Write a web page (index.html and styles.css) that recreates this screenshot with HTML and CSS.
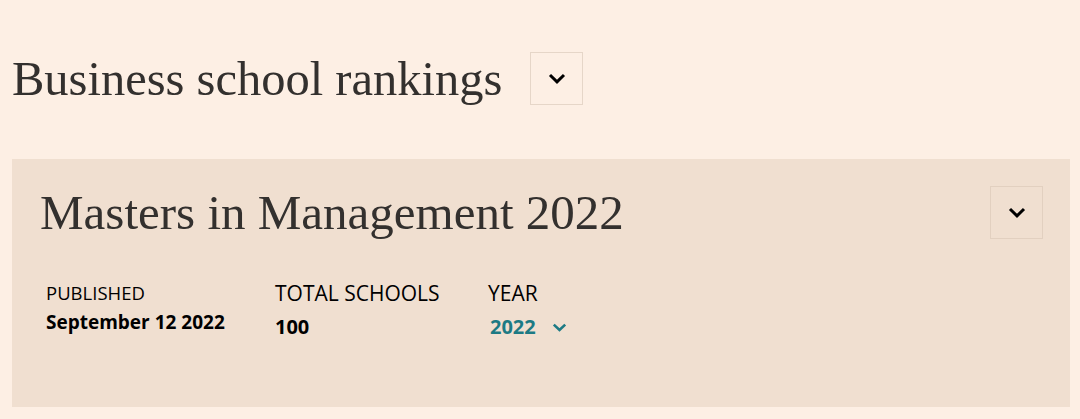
FILE: index.html
```html
<!DOCTYPE html>
<html lang="en">
<head>
<meta charset="utf-8">
<title>Business school rankings</title>
<link rel="stylesheet" href="styles.css">
</head>
<body>
<main class="page">
  <header class="page-head">
    <h1 class="page-title">Business school rankings</h1>
    <button class="select-btn" type="button" aria-label="Choose ranking">
      <svg width="18" height="11" viewBox="0 0 18 11"><path d="M2 2 L9 8.8 L16 2" fill="none" stroke="#000" stroke-width="3"/></svg>
    </button>
  </header>

  <section class="ranking-card">
    <div class="card-head">
      <h2 class="card-title">Masters in Management 2022</h2>
      <button class="select-btn" type="button" aria-label="Choose table">
        <svg width="18" height="11" viewBox="0 0 18 11"><path d="M2 2 L9 8.8 L16 2" fill="none" stroke="#000" stroke-width="3"/></svg>
      </button>
    </div>
    <dl class="meta">
      <div class="meta-item meta-item--small">
        <dt class="meta-label">PUBLISHED</dt>
        <dd class="meta-value">September 12 2022</dd>
      </div>
      <div class="meta-item">
        <dt class="meta-label">TOTAL SCHOOLS</dt>
        <dd class="meta-value">100</dd>
      </div>
      <div class="meta-item">
        <dt class="meta-label">YEAR</dt>
        <dd class="meta-value year">2022
          <svg class="year-chev" width="15" height="9" viewBox="0 0 15 9"><path d="M1.8 1.6 L7.5 7 L13.2 1.6" fill="none" stroke="#1d7a84" stroke-width="2.6"/></svg>
        </dd>
      </div>
    </dl>
  </section>
</main>
</body>
</html>
```

FILE: styles.css
```css
html, body {
  margin: 0;
  padding: 0;
  background: #fdefe4;
}

.page {
  padding: 52px 10px 0 12px;
  color: #33302e;
}

.page-head {
  display: flex;
  align-items: center;
  gap: 28px;
  margin-bottom: 54px;
}

.page-title {
  margin: 0;
  font-family: "Liberation Serif", "Times New Roman", serif;
  font-weight: 400;
  font-size: 48.5px;
  line-height: 53px;
  color: #33302e;
}

.select-btn {
  width: 53px;
  height: 53px;
  box-sizing: border-box;
  display: flex;
  align-items: center;
  justify-content: center;
  padding: 0;
  background: transparent;
  border: 1px solid #e6d6c8;
  cursor: pointer;
}

.ranking-card {
  background: #f0dfd0;
  padding: 27px 27px 68px 28px;
}

.card-head {
  display: flex;
  align-items: center;
  justify-content: space-between;
}

.card-title {
  margin: 0;
  font-family: "Liberation Serif", "Times New Roman", serif;
  font-weight: 400;
  font-size: 49px;
  line-height: 53px;
  color: #33302e;
}

.ranking-card .select-btn {
  border-color: #e2d0c0;
}

.meta {
  display: grid;
  grid-template-columns: 229px 213px auto;
  margin: 42px 0 0 6px;
  font-family: "Open Sans", "Liberation Sans", sans-serif;
  color: #000;
}

.meta-item {
  margin: 0;
}

.meta-label {
  font-size: 21px;
  line-height: 24px;
}

.meta-value {
  margin: 10px 0 0;
  font-size: 20px;
  line-height: 24px;
  font-weight: 700;
}

.meta-item--small .meta-label {
  font-size: 18.5px;
  line-height: 22px;
  padding-top: 1px;
}

.meta-item--small .meta-value {
  font-size: 19px;
  margin-top: 6px;
}

.meta-value.year {
  display: flex;
  align-items: center;
  gap: 16px;
  color: #1d7a84;
  padding-left: 2px;
}
```
